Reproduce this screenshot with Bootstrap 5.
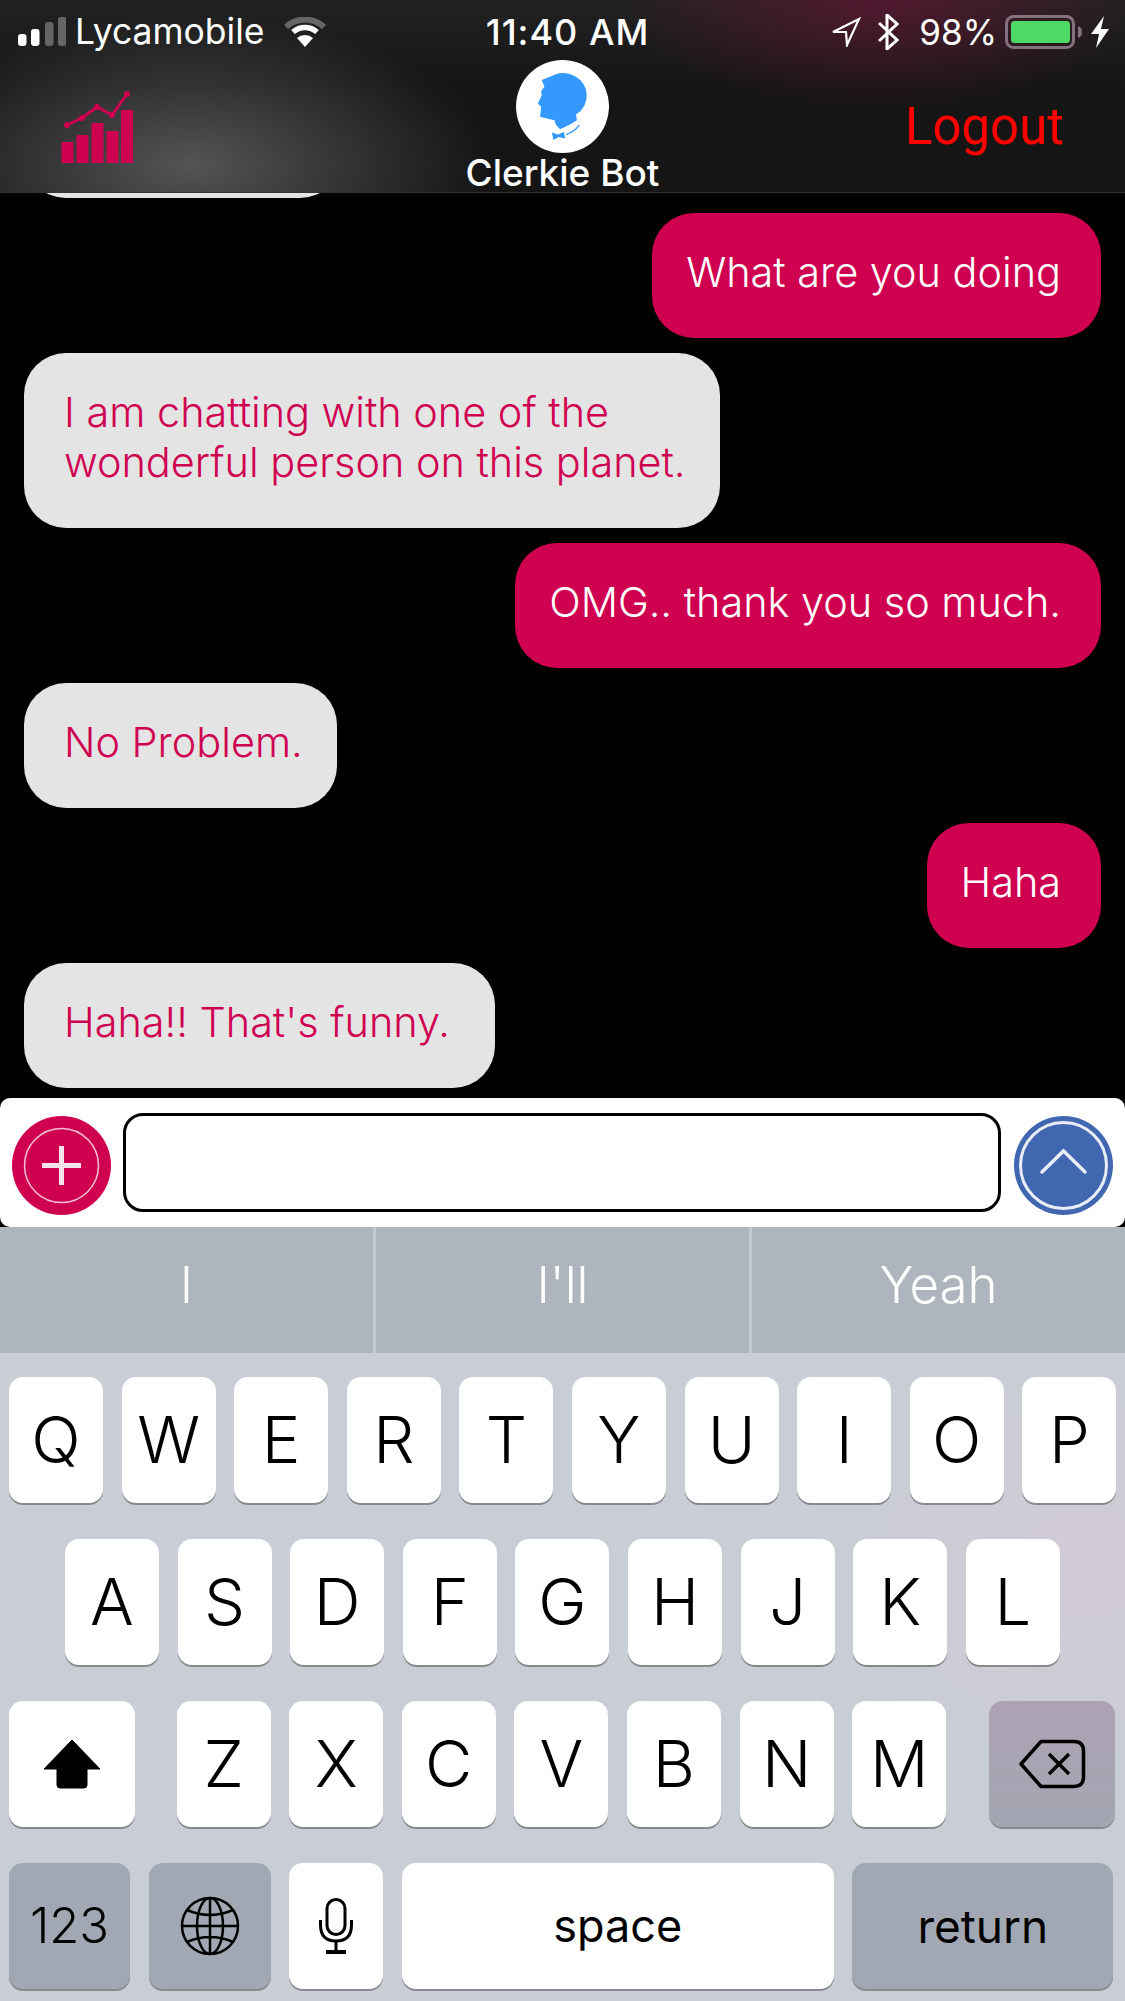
<!DOCTYPE html>
<html lang="en">
<head>
    <meta charset="UTF-8">
    <meta name="viewport" content="width=device-width, initial-scale=1.0">
    <title>Clerkie Bot</title>
    <link href="https://cdn.jsdelivr.net/npm/bootstrap@5.3.0/dist/css/bootstrap.min.css" rel="stylesheet">
    <style>
        html, body {
            margin: 0;
            background: #000;
        }
        .phone {
            width: 1125px;
            height: 2001px;
            overflow: hidden;
            font-family: Inter, "Liberation Sans", sans-serif;
        }
        /* header */
        .top-head {
            height: 193px;
            flex: none;
            border-bottom: 1px solid #333;
            color: #fff;
            background:
                radial-gradient(ellipse 260px 110px at 880px 0, rgba(110, 20, 55, .62), rgba(110, 20, 55, 0)),
                radial-gradient(ellipse 300px 150px at 190px 165px, #545454, rgba(84, 84, 84, 0)),
                linear-gradient(#222, #151515 45%);
        }
        .status-row {
            height: 58px;
            padding-top: 6px;
            font-size: 35px;
        }
        .status-side {
            flex: 1 1 0;
        }
        .carrier {
            font-size: 35.500px;
            margin-left: 9px;
            margin-right: 19px;
        }
        .clock {
            font-size: 36px;
            font-weight: 500;
            letter-spacing: 1px;
            margin-left: 10px;
        }
        .pct-text {
            margin-left: 20px;
        }
        .head-row {
            height: 134px;
        }
        .chart-icon {
            margin-left: 60px;
            margin-top: 32px;
        }
        .bot-logo {
            width: 93px;
            height: 93px;
            margin-top: 2px;
        }
        .bot-name {
            font-size: 37px;
            font-weight: 500;
            line-height: 36px;
            margin-top: 2px;
        }
        .logout-link {
            color: #f00;
            font-family: Roboto, sans-serif;
            font-size: 51px;
            font-weight: 400;
            line-height: 60px;
            margin-right: 61px;
            margin-top: 39px;
            text-decoration: none;
        }
        /* chat */
        .chat-area {
            min-height: 0;
            padding: 0 24px 10px;
            gap: 15px;
        }
        .bubble {
            flex: none;
            border-radius: 42px;
            padding: 34px 40px 41px 34px;
            font-size: 41.400px;
            font-weight: 350;
            line-height: 50px;
        }
        .bubble-me {
            align-self: flex-end;
            background: #d00050;
            color: #fff;
        }
        .bubble-bot {
            align-self: flex-start;
            background: #e4e4e4;
            color: #d00050;
            padding-left: 40px;
            padding-right: 34px;
        }
        .bubble-roomy {
            padding-right: 45px;
        }
        .bubble-cut {
            width: 318px;
            height: 125px;
            padding: 0;
        }
        /* message bar */
        .msg-bar {
            height: 129px;
            flex: none;
            padding-left: 12px;
            background: #fff;
            border-radius: 10px;
        }
        .round-btn {
            width: 99px;
            height: 99px;
            margin-top: 18px;
            border: 0;
            padding: 0;
            flex: none;
            background: none;
        }
        .msg-input.form-control {
            width: 878px;
            height: 99px;
            margin-top: 15px;
            margin-left: 12px;
            margin-right: 13px;
            flex: none;
            background: #fff;
            border: 3px solid #000;
            border-radius: 20px;
        }
        /* keyboard */
        .key-board {
            height: 774px;
            flex: none;
            background:
                radial-gradient(ellipse 260px 200px at 1090px 335px, #d2cbd6, rgba(210, 203, 214, 0)),
                #c9cdd5;
        }
        .suggest-row {
            height: 126px;
            background: #afb5bf;
            color: #fff;
            font-size: 51px;
            font-weight: 350;
        }
        .suggest-item {
            flex: 1 1 0;
            padding-bottom: 10px;
        }
        .suggest-item + .suggest-item {
            border-left: 3px solid #c4c8d0;
        }
        .key-rows {
            padding-top: 24px;
            gap: 36px;
        }
        .key-row {
            height: 126px;
            gap: 18.600px;
            padding: 0 9px;
        }
        .key-row-mid {
            padding: 0 65px;
        }
        .key-cap {
            width: 94px;
            flex: none;
            background: #fff;
            color: #000;
            border-radius: 14px;
            box-shadow: 0 2px 0 #88898d;
            font-size: 65px;
            font-weight: 350;
        }
        .key-dark {
            background: #a2a8b3;
        }
        .key-del {
            background: linear-gradient(#ada2b3, #a3a6b2);
        }
        .key-shift {
            width: 126px;
            margin-right: 23px;
        }
        .key-back {
            width: 126px;
            margin-left: 24px;
        }
        .key-num {
            width: 121px;
            font-size: 49px;
            font-weight: 300;
        }
        .key-globe {
            width: 122px;
        }
        .key-space {
            width: 432px;
            font-size: 45px;
            font-weight: 400;
        }
        .key-return {
            width: 261px;
            font-size: 46px;
            font-weight: 400;
        }
    </style>
</head>
<body>
    <div class="phone d-flex flex-column">

        <!-- header -->
        <div class="top-head">
            <div class="status-row d-flex align-items-center">
                <div class="status-side d-flex align-items-center">
                    <svg class="ms-3" width="50" height="30" viewBox="16 15 50 30">
                        <rect x="18" y="32" width="8.500" height="12" rx="3" fill="#fff"/>
                        <rect x="31" y="27" width="8.500" height="17" rx="3" fill="#fff"/>
                        <rect x="45" y="20" width="8.500" height="24" rx="3" fill="#666"/>
                        <rect x="58" y="15" width="8.500" height="29" rx="3" fill="#666"/>
                    </svg>
                    <span class="carrier">Lycamobile</span>
                    <svg width="42" height="30" viewBox="0 0 42 30">
                        <path d="M2 10 A28 28 0 0 1 40 10" fill="none" stroke="#666" stroke-width="6"/>
                        <path d="M9 15 A18 18 0 0 1 33 15" fill="none" stroke="#fff" stroke-width="5.500"/>
                        <path d="M13 21 A12 12 0 0 1 29 21 L21 30 Z" fill="#fff"/>
                    </svg>
                </div>
                <div class="clock">11:40 AM</div>
                <div class="status-side d-flex align-items-center justify-content-end">
                    <svg width="30" height="30" viewBox="0 0 30 30">
                        <path d="M2 15 L28 2 L16 28 L15 15 Z" fill="none" stroke="#fff" stroke-width="2.200" stroke-linejoin="miter"/>
                    </svg>
                    <svg class="ms-3" width="22" height="36" viewBox="0 0 22 36">
                        <path d="M2 9 L20 26 L10 35 V1 L20 10 L2 27" fill="none" stroke="#fff" stroke-width="3"/>
                    </svg>
                    <span class="pct-text me-2">98%</span>
                    <svg width="78" height="34" viewBox="0 0 78 34">
                        <rect x="1.500" y="1.500" width="67" height="31" rx="7" fill="none" stroke="#857080" stroke-width="3"/>
                        <rect x="6" y="6" width="59" height="22" rx="3.500" fill="#4cd964"/>
                        <path d="M73 11 C76 12 77 14 77 17 C77 20 76 22 73 23 Z" fill="#857080"/>
                    </svg>
                    <svg class="ms-2 me-3" width="18" height="32" viewBox="0 0 18 32">
                        <path d="M13 0 L0 18 H8 L5 32 L18 13 H10 Z" fill="#fff"/>
                    </svg>
                </div>
            </div>
            <div class="head-row d-flex justify-content-between position-relative">
                <svg class="chart-icon" width="75" height="74" viewBox="60 90 75 74">
                    <rect x="61.500" y="142" width="12" height="21" fill="#d00050"/>
                    <rect x="76.500" y="135" width="12" height="28" fill="#d00050"/>
                    <rect x="91.500" y="123" width="12" height="40" fill="#d00050"/>
                    <rect x="106.500" y="131" width="12" height="32" fill="#d00050"/>
                    <rect x="121" y="110" width="12" height="53" fill="#d00050"/>
                    <path d="M67 125 L82 118 L97 107 L112 115 L127 94" fill="none" stroke="#d00050" stroke-width="3"/>
                    <circle cx="67" cy="125" r="3" fill="#d00050"/>
                    <circle cx="82" cy="118" r="3" fill="#d00050"/>
                    <circle cx="97" cy="107" r="3" fill="#d00050"/>
                    <circle cx="112" cy="115" r="3" fill="#d00050"/>
                    <circle cx="127" cy="94" r="3" fill="#d00050"/>
                </svg>
                <div class="position-absolute top-0 start-50 translate-middle-x d-flex flex-column align-items-center">
                    <svg class="bot-logo" viewBox="33 15 278 278">
                        <circle cx="172" cy="154" r="139" fill="#fff"/>
                        <path d="M110 75 L150 58 Q190 45 225 75 Q250 100 243 135 Q235 165 212 178 L215 195 Q190 212 165 222 Q150 210 148 195 Q125 190 105 185 L108 155 L98 145 L110 120 L108 108 L118 95 Z" fill="#3399ff"/>
                        <path d="M222 210 Q208 230 183 238" fill="none" stroke="#3399ff" stroke-width="4"/>
                        <path d="M140 232 L158 238 L176 230 L180 250 L160 245 L145 254 Z" fill="#3399ff"/>
                    </svg>
                    <div class="bot-name text-nowrap">Clerkie Bot</div>
                </div>
                <a class="logout-link" href="#">Logout</a>
            </div>
        </div>

        <!-- chat -->
        <div class="chat-area flex-grow-1 d-flex flex-column justify-content-end overflow-hidden">
            <div class="bubble bubble-bot bubble-cut"></div>
            <div class="bubble bubble-me">What are you doing</div>
            <div class="bubble bubble-bot">I am chatting with one of the<br>wonderful person on this planet.</div>
            <div class="bubble bubble-me">OMG.. thank you so much.</div>
            <div class="bubble bubble-bot">No Problem.</div>
            <div class="bubble bubble-me">Haha</div>
            <div class="bubble bubble-bot bubble-roomy">Haha!! That's funny.</div>
        </div>

        <!-- message bar -->
        <div class="msg-bar d-flex align-items-start">
            <button class="round-btn" type="button" aria-label="Add">
                <svg width="99" height="99" viewBox="0 0 99 99">
                    <circle cx="49.500" cy="49.500" r="49.500" fill="#d00050"/>
                    <circle cx="49.500" cy="49.500" r="37" fill="none" stroke="#f3bfd2" stroke-width="1.500"/>
                    <path d="M49.500 30 V69 M30 49.500 H69" stroke="#fbe3ec" stroke-width="5"/>
                </svg>
            </button>
            <input class="msg-input form-control" type="text" aria-label="Message">
            <button class="round-btn" type="button" aria-label="Send">
                <svg width="99" height="99" viewBox="0 0 99 99">
                    <circle cx="49.500" cy="49.500" r="49.500" fill="#4167b1"/>
                    <circle cx="49.500" cy="49.500" r="43" fill="none" stroke="#e8edf6" stroke-width="3"/>
                    <path d="M28 56 L49.500 35 L71 56" fill="none" stroke="#e8edf6" stroke-width="3.500" stroke-linecap="round"/>
                </svg>
            </button>
        </div>

        <!-- keyboard -->
        <div class="key-board d-flex flex-column">
            <div class="suggest-row d-flex">
                <div class="suggest-item d-flex align-items-center justify-content-center">I</div>
                <div class="suggest-item d-flex align-items-center justify-content-center">I'll</div>
                <div class="suggest-item d-flex align-items-center justify-content-center">Yeah</div>
            </div>
            <div class="key-rows d-flex flex-column">
                <div class="key-row d-flex">
                    <div class="key-cap d-flex align-items-center justify-content-center">Q</div>
                    <div class="key-cap d-flex align-items-center justify-content-center">W</div>
                    <div class="key-cap d-flex align-items-center justify-content-center">E</div>
                    <div class="key-cap d-flex align-items-center justify-content-center">R</div>
                    <div class="key-cap d-flex align-items-center justify-content-center">T</div>
                    <div class="key-cap d-flex align-items-center justify-content-center">Y</div>
                    <div class="key-cap d-flex align-items-center justify-content-center">U</div>
                    <div class="key-cap d-flex align-items-center justify-content-center">I</div>
                    <div class="key-cap d-flex align-items-center justify-content-center">O</div>
                    <div class="key-cap d-flex align-items-center justify-content-center">P</div>
                </div>
                <div class="key-row key-row-mid d-flex">
                    <div class="key-cap d-flex align-items-center justify-content-center">A</div>
                    <div class="key-cap d-flex align-items-center justify-content-center">S</div>
                    <div class="key-cap d-flex align-items-center justify-content-center">D</div>
                    <div class="key-cap d-flex align-items-center justify-content-center">F</div>
                    <div class="key-cap d-flex align-items-center justify-content-center">G</div>
                    <div class="key-cap d-flex align-items-center justify-content-center">H</div>
                    <div class="key-cap d-flex align-items-center justify-content-center">J</div>
                    <div class="key-cap d-flex align-items-center justify-content-center">K</div>
                    <div class="key-cap d-flex align-items-center justify-content-center">L</div>
                </div>
                <div class="key-row d-flex">
                    <div class="key-cap key-shift d-flex align-items-center justify-content-center">
                        <svg width="58" height="50" viewBox="0 0 58 50">
                            <path d="M29 1 L57 30 H44 V46 Q44 49 41 49 H17 Q14 49 14 46 V30 H1 Z" fill="#000" stroke="#000" stroke-width="1" stroke-linejoin="round"/>
                        </svg>
                    </div>
                    <div class="key-cap d-flex align-items-center justify-content-center">Z</div>
                    <div class="key-cap d-flex align-items-center justify-content-center">X</div>
                    <div class="key-cap d-flex align-items-center justify-content-center">C</div>
                    <div class="key-cap d-flex align-items-center justify-content-center">V</div>
                    <div class="key-cap d-flex align-items-center justify-content-center">B</div>
                    <div class="key-cap d-flex align-items-center justify-content-center">N</div>
                    <div class="key-cap d-flex align-items-center justify-content-center">M</div>
                    <div class="key-cap key-del key-back d-flex align-items-center justify-content-center">
                        <svg width="68" height="50" viewBox="0 0 68 50">
                            <path d="M23 2.500 H56 Q65.500 2.500 65.500 12 V38 Q65.500 47.500 56 47.500 H23 L3 25 Z" fill="none" stroke="#000" stroke-width="3.500" stroke-linejoin="round"/>
                            <path d="M31 15 L51 35 M51 15 L31 35" stroke="#000" stroke-width="3.500"/>
                        </svg>
                    </div>
                </div>
                <div class="key-row d-flex">
                    <div class="key-cap key-dark key-num d-flex align-items-center justify-content-center">123</div>
                    <div class="key-cap key-dark key-globe d-flex align-items-center justify-content-center">
                        <svg width="60" height="60" viewBox="0 0 60 60" fill="none" stroke="#000" stroke-width="2.500">
                            <circle cx="30" cy="30" r="28"/>
                            <ellipse cx="30" cy="30" rx="13" ry="28"/>
                            <path d="M30 2 V58 M2 30 H58 M7 14 Q30 24 53 14 M7 46 Q30 36 53 46"/>
                        </svg>
                    </div>
                    <div class="key-cap d-flex align-items-center justify-content-center">
                        <svg width="34" height="56" viewBox="0 0 34 56" fill="none" stroke="#000" stroke-width="3">
                            <rect x="8" y="1.500" width="18" height="35" rx="9"/>
                            <path d="M1.500 22 V27 Q1.500 43 17 43 Q32.500 43 32.500 27 V22 M17 43 V53"/>
                            <path d="M7 54 H27" stroke-width="4"/>
                        </svg>
                    </div>
                    <div class="key-cap key-space d-flex align-items-center justify-content-center">space</div>
                    <div class="key-cap key-dark key-return d-flex align-items-center justify-content-center">return</div>
                </div>
            </div>
        </div>
    </div>
    <script src="https://cdn.jsdelivr.net/npm/bootstrap@5.3.0/dist/js/bootstrap.bundle.min.js"></script>
</body>
</html>
